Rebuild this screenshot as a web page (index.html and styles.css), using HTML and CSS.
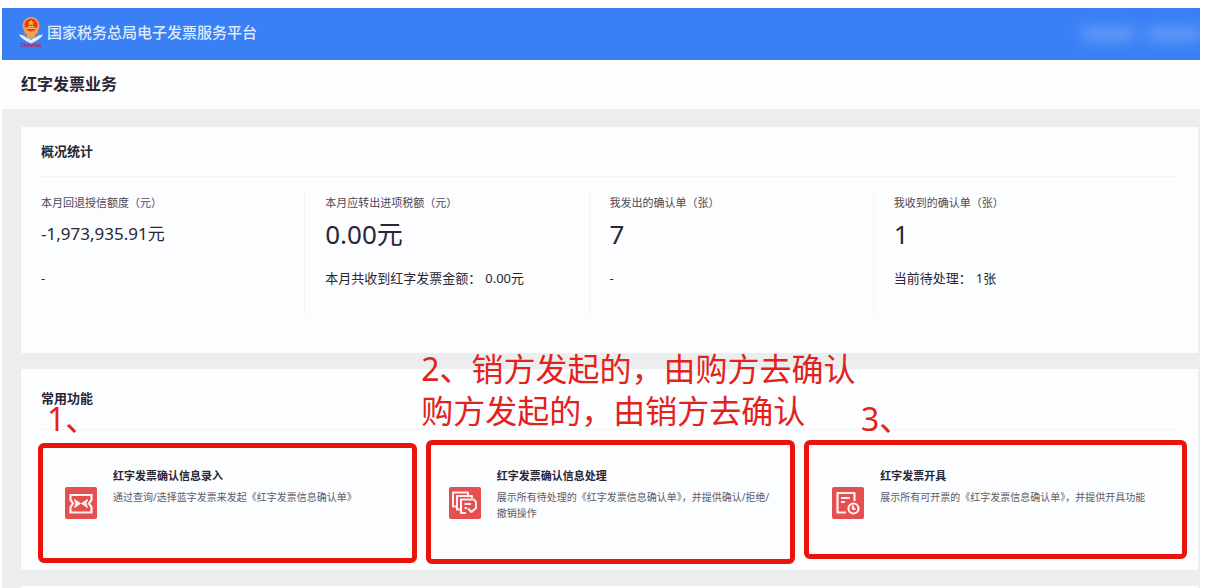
FILE: index.html
```html
<!DOCTYPE html>
<html lang="zh-CN">
<head>
<meta charset="utf-8">
<title>红字发票业务</title>
<link rel="stylesheet" href="styles.css">
</head>
<body>
<div class="page">
  <header class="topbar">
    <svg class="logo" viewBox="0 0 26 34" aria-hidden="true">
      <path d="M1 17.500Q7 18 13 23Q19 18 25 17.500Q23 22 13 26.500Q3 22 1 17.500Z" fill="#e8eef8"/>
      <path d="M5 8Q13 15 21 8L20 19Q13 24 6 19Z" fill="#7d8296"/>
      <path d="M9 13H17V20L13 23L9 20Z" fill="#c9a58a"/>
      <circle cx="13" cy="8.500" r="8.500" fill="#f0a050"/>
      <circle cx="13" cy="8" r="6.500" fill="#e8381c"/>
      <path d="M13 2.500L14 4.700L16.300 4.900L14.600 6.400L15.100 8.500L13 7.400L10.900 8.500L11.400 6.400L9.700 4.900L12 4.700Z" fill="#f8b84c"/>
      <path d="M8 10.500H18V12H8ZM10 9H16V10H10Z" fill="#f8b84c"/>
      <path d="M6 13.500Q13 17.500 20 13.500L19 16.500Q13 19.500 7 16.500Z" fill="#f0a050"/>
      <text class="logo-text" x="13" y="30" text-anchor="middle">Chinatax</text>
    </svg>
    <span class="brand">国家税务总局电子发票服务平台</span>
    <span class="user" aria-hidden="true"><i class="smudge"></i><i class="smudge"></i></span>
  </header>

  <h1 class="page-title">红字发票业务</h1>

  <main class="content">
    <section class="panel">
      <h2 class="panel-title">概况统计</h2>
      <div class="stats">
        <div class="stat">
          <div class="label">本月回退授信额度（元）</div>
          <div class="value small">-1,973,935.91元</div>
          <div class="foot">-</div>
        </div>
        <div class="stat">
          <div class="label">本月应转出进项税额（元）</div>
          <div class="value">0.00元</div>
          <div class="foot"><span>本月共收到红字发票金额：</span><span>0.00元</span></div>
        </div>
        <div class="stat">
          <div class="label">我发出的确认单（张）</div>
          <div class="value">7</div>
          <div class="foot">-</div>
        </div>
        <div class="stat">
          <div class="label">我收到的确认单（张）</div>
          <div class="value">1</div>
          <div class="foot"><span>当前待处理：</span><span>1张</span></div>
        </div>
      </div>
    </section>

    <section class="panel functions">
      <h2 class="panel-title tall">常用功能</h2>
      <div class="cards">
        <a class="card first" href="#entry">
          <svg class="icon" viewBox="0 0 32 32" aria-hidden="true">
            <rect width="32" height="32" rx="2" fill="#e4504f"/>
            <path d="M5.500 8H26.500V13L24 16.500L26.500 20V25.500H5.500V20L8 16.500L5.500 13Z" fill="none" stroke="#fff0f0" stroke-width="2.200"/>
            <path d="M9.500 12.500L15.500 16.500L9.500 20.500L11 16.500ZM22.500 12.500L16.500 16.500L22.500 20.500L21 16.500Z" fill="#fff0f0" stroke="#fff0f0"/>
          </svg>
          <div class="card-text">
            <h3>红字发票确认信息录入</h3>
            <p>通过查询/选择蓝字发票来发起《红字发票信息确认单》</p>
          </div>
        </a>
        <a class="card second" href="#process">
          <svg class="icon" viewBox="0 0 32 32" aria-hidden="true">
            <rect width="32" height="32" rx="2" fill="#e4504f"/>
            <g fill="none" stroke="#fff0f0" stroke-width="2" stroke-linejoin="round">
              <path d="M7 19.500H4V5.500H19V8"/>
              <path d="M11 22.500H8V9H23V11"/>
              <path d="M17 26H12V12.500H25L27 15V21L22.500 25L19 21.500"/>
              <path d="M15.500 17H22M15.500 21H18"/>
            </g>
          </svg>
          <div class="card-text">
            <h3>红字发票确认信息处理</h3>
            <p>展示所有待处理的《红字发票信息确认单》，并提供确认/拒绝/撤销操作</p>
          </div>
        </a>
        <a class="card third" href="#issue">
          <svg class="icon" viewBox="0 0 32 32" aria-hidden="true">
            <rect width="32" height="32" rx="2" fill="#e4504f"/>
            <g fill="none" stroke="#fff0f0" stroke-width="2.200" stroke-linejoin="round">
              <path d="M14 25.500H5.500V6H22.500V14"/>
              <path d="M9 11H18M9 15H13"/>
              <circle cx="21.500" cy="21.500" r="5"/>
              <path d="M21 18.500V22H23.500"/>
            </g>
          </svg>
          <div class="card-text">
            <h3>红字发票开具</h3>
            <p>展示所有可开票的《红字发票信息确认单》，并提供开具功能</p>
          </div>
        </a>
      </div>
      <div class="note note-one">1、</div>
      <div class="note note-two">2、销方发起的，由购方去确认<br>购方发起的，由销方去确认</div>
      <div class="note note-three">3、</div>
    </section>

    <section class="panel next"></section>
  </main>
</div>
</body>
</html>
```
FILE: styles.css
```css
* {
  box-sizing: border-box;
}

body {
  margin: 0;
  background: #fff;
  color: #2a2636;
  font-family: "Noto Sans", "Noto Sans CJK SC", sans-serif;
  font-size: 13px;
}

h1, h2, h3, p {
  margin: 0;
}

.page {
  display: flex;
  flex-direction: column;
  min-height: 100vh;
  padding: 8px 6px 0 2px;
  overflow: hidden;
}

.topbar {
  display: flex;
  align-items: center;
  height: 52px;
  padding-left: 16px;
  background: #3a80f5;
  color: #dfeafd;
}

.logo {
  width: 26px;
  height: 34px;
  margin-right: 3px;
}

.logo-text {
  fill: #b8245c;
  font-size: 5px;
  font-style: italic;
  font-weight: 700;
}

.brand {
  flex: 1;
  padding-bottom: 4px;
  font-size: 15px;
  font-weight: 500;
  line-height: 20px;
}

.user {
  display: flex;
  align-items: center;
  gap: 12px;
  width: 130px;
  height: 52px;
  padding-left: 12px;
  overflow: hidden;
}

.smudge {
  flex: 1;
  height: 12px;
  background: #6a9ff9;
  filter: blur(7px);
}

.page-title {
  padding: 12px 19px 13px;
  background: #fdfdfe;
  font-size: 16px;
  font-weight: 700;
  line-height: 24px;
}

.content {
  flex: 1;
  display: flex;
  flex-direction: column;
  gap: 16px;
  padding: 18px 2px 0 19px;
  background: #ebedef;
}

.panel {
  position: relative;
  padding: 0 20px;
  background: #fcfdff;
}

.panel-title {
  border-bottom: 1px solid #f3f4f7;
  font-size: 13px;
  font-weight: 700;
  line-height: 49px;
}

.panel-title.tall {
  line-height: 58px;
  padding-bottom: 2px;
}

.stats {
  display: grid;
  grid-template-columns: repeat(4, 1fr);
  padding: 13px 0 38px;
}

.stat {
  margin-right: 20px;
  padding-bottom: 27px;
  border-right: 1px solid #f3f4f7;
}

.stat:last-child {
  border-right: 0;
}

.label {
  color: #4c4858;
  font-size: 11px;
  line-height: 26px;
}

.value {
  font-size: 26px;
  line-height: 36px;
}

.value.small {
  font-size: 17px;
}

.foot {
  display: flex;
  gap: 4px;
  margin-top: 16px;
  font-size: 13px;
  line-height: 20px;
}

.cards {
  display: grid;
  grid-template-columns: repeat(3, 1fr);
  gap: 14px;
  padding: 13px 0 10px;
}

.card {
  position: relative;
  display: flex;
  gap: 16px;
  min-height: 117px;
  padding: 23px 20px 0 24px;
  color: inherit;
  text-decoration: none;
}

.card::after {
  content: "";
  position: absolute;
  border: 5px solid #e9140b;
  border-radius: 6px;
}

.card.first::after {
  inset: 0 -6px -3px -3px;
}

.card.second::after {
  inset: -3px -1px -4px 1px;
}

.card.third::after {
  inset: -3px -9px 1px -4px;
}

.icon {
  flex: none;
  width: 32px;
  height: 32px;
  margin-top: 21px;
}

.card h3 {
  font-size: 11px;
  font-weight: 700;
  line-height: 20px;
}

.card p {
  margin-top: 3px;
  color: #5c5a68;
  font-size: 10px;
  line-height: 16px;
}

.note {
  position: absolute;
  color: #e3221c;
  font-size: 32px;
  line-height: 42px;
  white-space: nowrap;
}

.note-one {
  top: 29px;
  left: 26px;
}

.note-two {
  top: -21px;
  left: 34%;
}

.note-three {
  top: 29px;
  left: 840px;
}

.panel.next {
  flex: 1;
  min-height: 3px;
}
```
